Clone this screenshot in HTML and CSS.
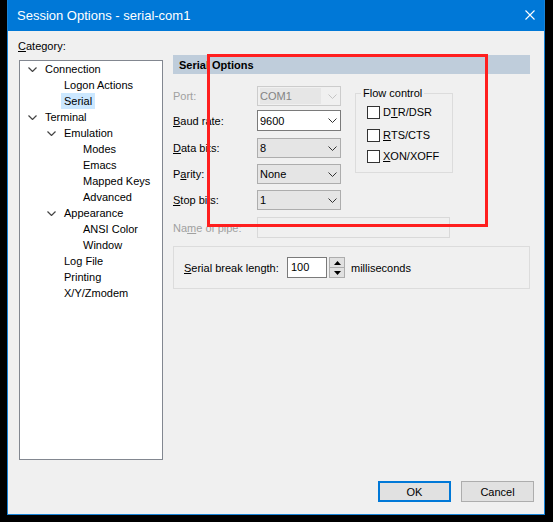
FILE: index.html
```html
<!DOCTYPE html>
<html lang="en">
<head>
  <meta charset="UTF-8">
  <title>Session Options - serial-com1</title>
  <link rel="stylesheet" href="styles.css">
</head>
<body>
  <div class="window">
    <div class="titlebar">
      <span class="title">Session Options - serial-com1</span>
      <svg class="close" width="10" height="10" viewBox="0 0 10 10">
        <path d="M0.5 0.5 L9.5 9.5 M9.5 0.5 L0.5 9.5" stroke="#fff" stroke-width="1.1" fill="none"/>
      </svg>
    </div>

    <div class="client">
      <div class="main">
        <div class="category">
          <div class="category-label"><u>C</u>ategory:</div>
          <ul class="tree">
            <li class="lvl0"><span class="twisty"><svg width="9" height="5" viewBox="0 0 9 5"><polyline points="0.5,0.5 4.5,4.5 8.5,0.5" fill="none" stroke="#444" stroke-width="1.2"/></svg></span><span class="node">Connection</span></li>
            <li class="lvl1"><span class="twisty"></span><span class="node">Logon Actions</span></li>
            <li class="lvl1"><span class="twisty"></span><span class="node selected">Serial</span></li>
            <li class="lvl0"><span class="twisty"><svg width="9" height="5" viewBox="0 0 9 5"><polyline points="0.5,0.5 4.5,4.5 8.5,0.5" fill="none" stroke="#444" stroke-width="1.2"/></svg></span><span class="node">Terminal</span></li>
            <li class="lvl1"><span class="twisty"><svg width="9" height="5" viewBox="0 0 9 5"><polyline points="0.5,0.5 4.5,4.5 8.5,0.5" fill="none" stroke="#444" stroke-width="1.2"/></svg></span><span class="node">Emulation</span></li>
            <li class="lvl2"><span class="twisty"></span><span class="node">Modes</span></li>
            <li class="lvl2"><span class="twisty"></span><span class="node">Emacs</span></li>
            <li class="lvl2"><span class="twisty"></span><span class="node">Mapped Keys</span></li>
            <li class="lvl2"><span class="twisty"></span><span class="node">Advanced</span></li>
            <li class="lvl1"><span class="twisty"><svg width="9" height="5" viewBox="0 0 9 5"><polyline points="0.5,0.5 4.5,4.5 8.5,0.5" fill="none" stroke="#444" stroke-width="1.2"/></svg></span><span class="node">Appearance</span></li>
            <li class="lvl2"><span class="twisty"></span><span class="node">ANSI Color</span></li>
            <li class="lvl2"><span class="twisty"></span><span class="node">Window</span></li>
            <li class="lvl1"><span class="twisty"></span><span class="node">Log File</span></li>
            <li class="lvl1"><span class="twisty"></span><span class="node">Printing</span></li>
            <li class="lvl1"><span class="twisty"></span><span class="node">X/Y/Zmodem</span></li>
          </ul>
        </div>

        <div class="panel">
          <div class="panel-header">Serial Options</div>
          <div class="panel-top">
            <div class="fields">
              <div class="field port disabled">
                <label>Port:</label>
                <div class="combo combo-disabled">
                  <span class="value"><span class="sel">COM1</span></span>
                  <svg width="9" height="5" viewBox="0 0 9 5"><polyline points="0.5,0.5 4.5,4.5 8.5,0.5" fill="none" stroke="#c4c4c4" stroke-width="1"/></svg>
                </div>
              </div>
              <div class="field baud">
                <label><u>B</u>aud rate:</label>
                <div class="combo combo-edit">
                  <span class="value">9600</span>
                  <svg width="9" height="5" viewBox="0 0 9 5"><polyline points="0.5,0.5 4.5,4.5 8.5,0.5" fill="none" stroke="#333" stroke-width="1"/></svg>
                </div>
              </div>
              <div class="field data">
                <label><u>D</u>ata bits:</label>
                <div class="combo">
                  <span class="value">8</span>
                  <svg width="9" height="5" viewBox="0 0 9 5"><polyline points="0.5,0.5 4.5,4.5 8.5,0.5" fill="none" stroke="#333" stroke-width="1"/></svg>
                </div>
              </div>
              <div class="field parity">
                <label>P<u>a</u>rity:</label>
                <div class="combo">
                  <span class="value">None</span>
                  <svg width="9" height="5" viewBox="0 0 9 5"><polyline points="0.5,0.5 4.5,4.5 8.5,0.5" fill="none" stroke="#333" stroke-width="1"/></svg>
                </div>
              </div>
              <div class="field stop">
                <label><u>S</u>top bits:</label>
                <div class="combo">
                  <span class="value">1</span>
                  <svg width="9" height="5" viewBox="0 0 9 5"><polyline points="0.5,0.5 4.5,4.5 8.5,0.5" fill="none" stroke="#333" stroke-width="1"/></svg>
                </div>
              </div>
            </div>

            <fieldset class="flow">
              <legend>Flow control</legend>
              <div class="check first"><span class="box"></span>D<u>T</u>R/DSR</div>
              <div class="check second"><span class="box"></span><u>R</u>TS/CTS</div>
              <div class="check third"><span class="box"></span><u>X</u>ON/XOFF</div>
            </fieldset>
          </div>

          <div class="field pipe disabled">
            <label>Na<u>m</u>e of pipe:</label>
            <div class="textbox-disabled"></div>
          </div>

          <div class="break-group">
            <label><u>S</u>erial break length:</label>
            <div class="spin">
              <div class="spin-input">100</div>
              <div class="spin-buttons">
                <div class="spin-btn"><svg width="7" height="4" viewBox="0 0 7 4"><polygon points="0,4 3.5,0 7,4" fill="#000"/></svg></div>
                <div class="spin-btn"><svg width="7" height="4" viewBox="0 0 7 4"><polygon points="0,0 3.5,4 7,0" fill="#000"/></svg></div>
              </div>
            </div>
            <span class="unit">milliseconds</span>
          </div>
        </div>
      </div>

      <div class="buttons">
        <button class="btn default">OK</button>
        <button class="btn">Cancel</button>
      </div>
    </div>

    <!-- annotation drawn over the dialog -->
    <div class="highlight-box"></div>
  </div>
</body>
</html>
```

FILE: styles.css
```css
body {
  margin: 0;
  background-color: #000;
  font-family: "Liberation Sans", Arial, sans-serif;
  font-size: 11px;
  color: #000;
}

.window {
  position: relative;
  box-sizing: border-box;
  width: 538px;
  height: 515px;
  margin-left: 7px;
  background-color: #f0f0f0;
  border: 1px solid #1883d7;
  border-top: none;
  display: flex;
  flex-direction: column;
}

.titlebar {
  box-sizing: border-box;
  height: 31px;
  flex-shrink: 0;
  background-color: #0078d7;
  color: #fff;
  font-size: 13px;
  display: flex;
  align-items: center;
  padding: 0 9px 1px 9px;
}

.close {
  margin-left: auto;
}

.client {
  flex: 1;
  display: flex;
  flex-direction: column;
  padding: 8px 10px 12px 10px;
}

.main {
  display: flex;
  align-items: flex-start;
}

.category {
  width: 145px;
}

.category-label {
  height: 14px;
  line-height: 14px;
  margin-bottom: 7px;
}

.tree {
  list-style: none;
  margin: 0 0 0 1px;
  padding: 0;
  box-sizing: border-box;
  width: 144px;
  height: 400px;
  border: 1px solid #828790;
  background-color: #fff;
}

.tree li {
  display: flex;
  align-items: center;
  height: 16px;
  line-height: 16px;
  white-space: nowrap;
}

.tree .lvl0 { padding-left: 8px; }
.tree .lvl1 { padding-left: 27px; }
.tree .lvl2 { padding-left: 46px; }

.twisty {
  width: 17px;
  flex-shrink: 0;
  display: flex;
  align-items: center;
}

.twisty svg {
  display: block;
}

.node.selected {
  background-color: #cce8ff;
  margin-left: -3px;
  padding: 0 3px;
}

.panel {
  width: 357px;
  margin-left: 10px;
  margin-top: 16px;
}

.panel-header {
  height: 19px;
  line-height: 20px;
  padding-left: 6px;
  background-color: #bfcddb;
  font-weight: bold;
}

.panel-top {
  display: flex;
  align-items: flex-start;
}

.fields {
  width: 168px;
}

.field {
  display: flex;
  align-items: center;
  height: 20px;
}

.field label {
  width: 84px;
  flex-shrink: 0;
}

.field.disabled label {
  color: #a0a0a0;
}

.field.port { margin-top: 12px; }
.field.baud { margin-top: 4px; height: 21px; }
.field.data { margin-top: 7px; }
.field.parity { margin-top: 6px; }
.field.stop { margin-top: 6px; }
.field.pipe { margin-top: 7px; height: 21px; }

.combo {
  box-sizing: border-box;
  width: 84px;
  height: 100%;
  border: 1px solid #adadad;
  background-color: #e5e5e5;
  display: flex;
  align-items: center;
  padding: 0 3px 0 2px;
}

.combo .value {
  flex: 1;
}

.combo-edit {
  background-color: #fff;
  border-color: #7a7a7a;
}

.combo-disabled {
  border-color: #cccccc;
  background-color: #f0f0f0;
  color: #838383;
}

.combo-disabled .value {
  display: flex;
  align-self: stretch;
  margin: 1px 0;
  margin-right: 7px;
  background-color: #e6e6e6;
  align-items: center;
}

.flow {
  box-sizing: border-box;
  width: 98px;
  height: 87px;
  margin: 12px 0 0 14px;
  padding: 0 0 0 5px;
  border: 1px solid #dcdcdc;
}

.flow legend {
  padding: 0 2px;
  line-height: 14px;
}

.check {
  display: flex;
  align-items: center;
  height: 16px;
  margin-left: 6px;
}

.check.first { margin-top: 4px; }
.check.second { margin-top: 7px; }
.check.third { margin-top: 5px; }

.box {
  box-sizing: border-box;
  width: 13px;
  height: 13px;
  border: 1px solid #333;
  background-color: #fff;
  margin-right: 3px;
}

.textbox-disabled {
  box-sizing: border-box;
  width: 193px;
  height: 100%;
  border: 1px solid #d9d9d9;
  background-color: #f0f0f0;
}

.break-group {
  box-sizing: border-box;
  height: 43px;
  margin-top: 8px;
  padding-left: 10px;
  border: 1px solid #dcdcdc;
  display: flex;
  align-items: center;
}

.break-group label {
  width: 103px;
}

.spin {
  display: flex;
  height: 21px;
}

.spin-input {
  box-sizing: border-box;
  width: 40px;
  height: 21px;
  line-height: 19px;
  padding-left: 3px;
  border: 1px solid #7a7a7a;
  background-color: #fff;
}

.spin-buttons {
  width: 16px;
  margin-left: 2px;
  display: flex;
  flex-direction: column;
}

.spin-btn {
  box-sizing: border-box;
  flex: 1;
  border: 1px solid #adadad;
  background-color: #e1e1e1;
  display: flex;
  align-items: center;
  justify-content: center;
}

.spin-btn + .spin-btn {
  border-top: none;
}

.spin-btn svg {
  display: block;
}

.unit {
  margin-left: 6px;
}

.buttons {
  margin-top: auto;
  display: flex;
  justify-content: flex-end;
  gap: 10px;
}

.btn {
  box-sizing: border-box;
  width: 73px;
  height: 21px;
  padding: 0;
  font-family: inherit;
  font-size: 11px;
  color: #000;
  background-color: #e1e1e1;
  border: 1px solid #adadad;
  border-radius: 0;
}

.btn.default {
  border: 2px solid #0078d7;
}

.highlight-box {
  position: absolute;
  left: 199px;
  top: 54px;
  box-sizing: border-box;
  width: 281px;
  height: 173px;
  border: 3px solid #ff1f1f;
}
```
